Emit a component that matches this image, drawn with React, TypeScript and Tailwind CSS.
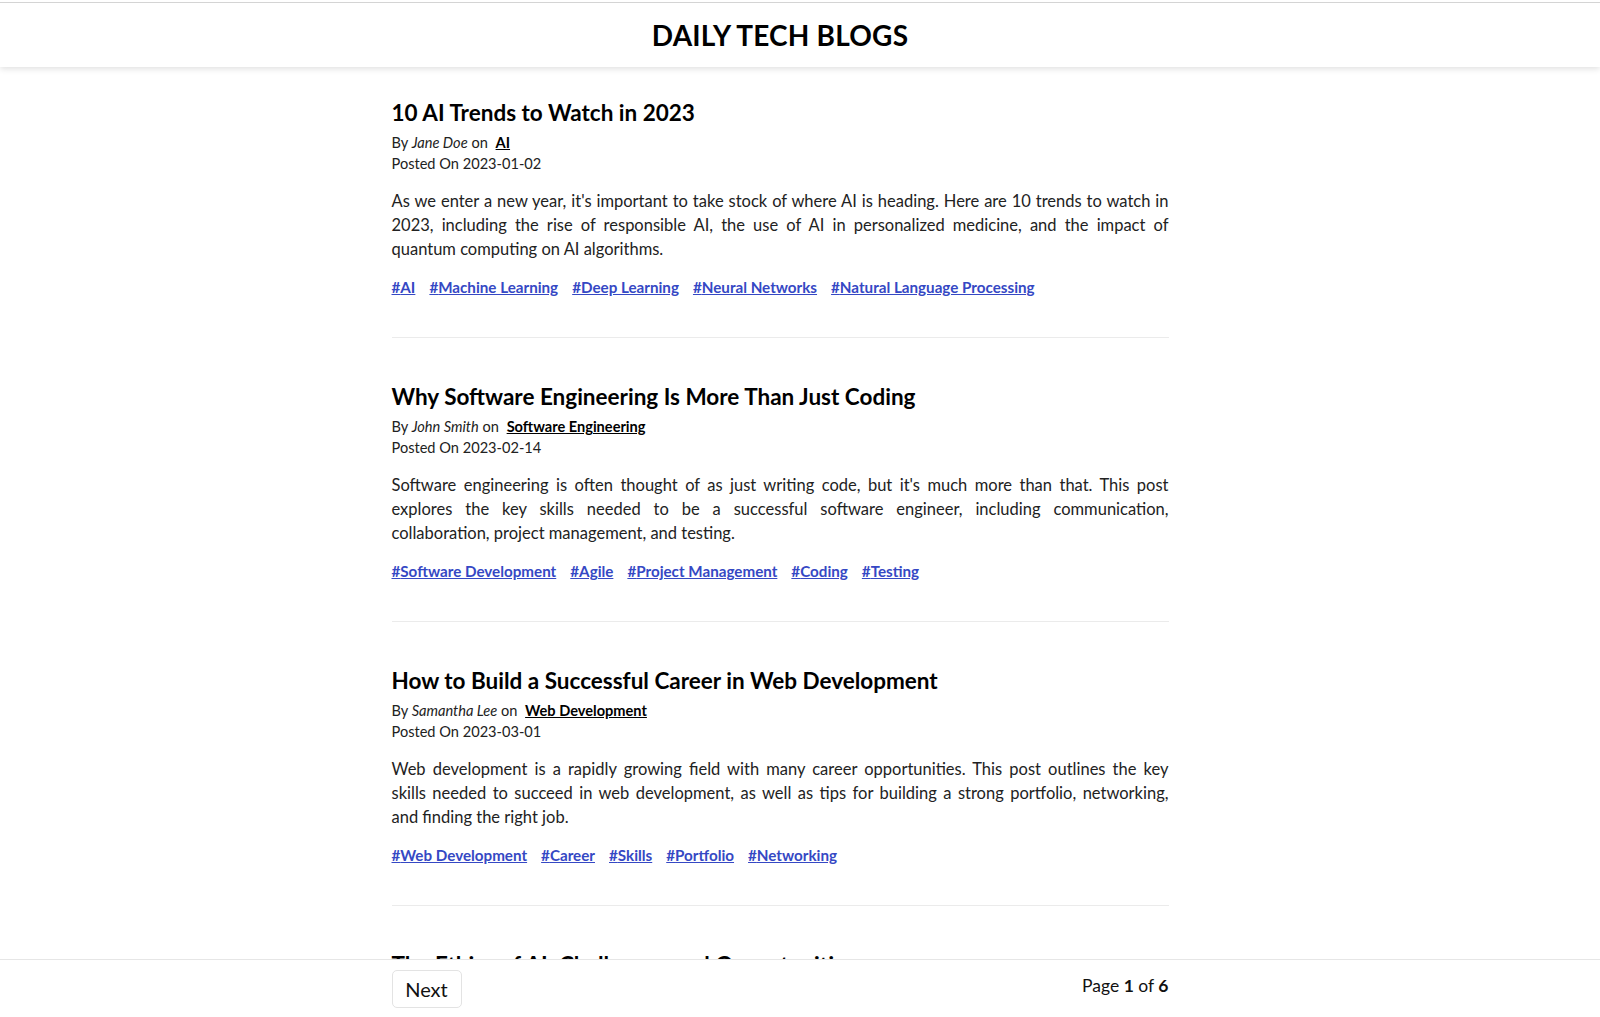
import React from 'react';

interface Post {
  title: string;
  author: string;
  category: string;
  date: string;
  body: string[];
  tags: string[];
}

// body is kept as the lines the page wraps to, so the justified text breaks where it should
const posts: Post[] = [
  {
    title: '10 AI Trends to Watch in 2023',
    author: 'Jane Doe',
    category: 'AI',
    date: '2023-01-02',
    body: [
      "As we enter a new year, it's important to take stock of where AI is heading. Here are 10 trends to watch in",
      '2023, including the rise of responsible AI, the use of AI in personalized medicine, and the impact of',
      'quantum computing on AI algorithms.',
    ],
    tags: ['AI', 'Machine Learning', 'Deep Learning', 'Neural Networks', 'Natural Language Processing'],
  },
  {
    title: 'Why Software Engineering Is More Than Just Coding',
    author: 'John Smith',
    category: 'Software Engineering',
    date: '2023-02-14',
    body: [
      "Software engineering is often thought of as just writing code, but it's much more than that. This post",
      'explores the key skills needed to be a successful software engineer, including communication,',
      'collaboration, project management, and testing.',
    ],
    tags: ['Software Development', 'Agile', 'Project Management', 'Coding', 'Testing'],
  },
  {
    title: 'How to Build a Successful Career in Web Development',
    author: 'Samantha Lee',
    category: 'Web Development',
    date: '2023-03-01',
    body: [
      'Web development is a rapidly growing field with many career opportunities. This post outlines the key',
      'skills needed to succeed in web development, as well as tips for building a strong portfolio, networking,',
      'and finding the right job.',
    ],
    tags: ['Web Development', 'Career', 'Skills', 'Portfolio', 'Networking'],
  },
  {
    title: 'The Ethics of AI: Challenges and Opportunities',
    author: 'David Kim',
    category: 'AI',
    date: '2023-03-20',
    body: [
      'As AI becomes more widespread, it raises important ethical questions. This post looks at the challenges',
      'of bias, privacy and accountability, and the opportunities for building AI systems that are fair and',
      'transparent.',
    ],
    tags: ['AI', 'Ethics', 'Privacy', 'Bias'],
  },
];

const font = "font-['Lato','Noto_Sans',sans-serif]";

function Article({ post, first }: { post: Post; first: boolean }) {
  return (
    <article className={`${first ? 'pt-[31px]' : 'pt-[44px]'} pb-[40px] border-b border-[#ebebeb]`}>
      <h2 className="text-[22.5px] leading-[30px] font-bold text-black">{post.title}</h2>
      <div className="mt-[4px] text-[14.6px] leading-[21px] text-[#222]">
        By <i>{post.author}</i> on{' '}
        <a href="#" className="ml-[4px] font-bold underline text-black">{post.category}</a>
      </div>
      <div className="text-[14.6px] leading-[21px] text-[#222]">Posted On {post.date}</div>
      <p className="mt-[15px] text-[16.5px] leading-[24px] text-[#222]">
        {post.body.map((line, i) => (
          <span
            key={i}
            className={
              i < post.body.length - 1
                ? 'block whitespace-nowrap text-justify [text-align-last:justify]'
                : 'block'
            }
          >
            {line}
          </span>
        ))}
      </p>
      <div className="mt-[16px] flex flex-wrap gap-x-[14px] text-[15.2px] leading-[20px]">
        {post.tags.map((t) => (
          <a key={t} href="#" className="font-bold underline text-[#3548c4]">#{t}</a>
        ))}
      </div>
    </article>
  );
}

export default function App() {
  return (
    <div className={`min-h-screen bg-white ${font}`}>
      <header className="sticky top-0 z-10 bg-white shadow-[0_2px_6px_rgba(0,0,0,0.12)]">
        <div className="pt-[2px]">
          <div className="h-[65px] border-t border-[#d4d4d4] flex items-center justify-center pr-[40px]">
            <h1 className="text-[28px] font-bold tracking-[0.2px] text-black">DAILY TECH BLOGS</h1>
          </div>
        </div>
      </header>

      <main className="pr-[40px] pb-[80px]">
        <div className="mx-auto w-[777px]">
          {posts.map((p, i) => (
            <Article key={p.title} post={p} first={i === 0} />
          ))}
        </div>
      </main>

      <footer className="fixed bottom-0 left-0 right-0 z-10 h-[58px] bg-white border-t border-[#e6e6e6]">
        <div className="pr-[40px]">
          <div className="mx-auto w-[777px] flex items-start justify-between">
            <button className="mt-[10px] h-[38px] w-[70px] rounded-[5px] border border-[#e3e3e3] bg-white text-[20px] text-[#111]">
              Next
            </button>
            <div className="mt-[13px] text-[17.5px] text-[#111]">
              Page <b>1</b> of <b>6</b>
            </div>
          </div>
        </div>
      </footer>
    </div>
  );
}
